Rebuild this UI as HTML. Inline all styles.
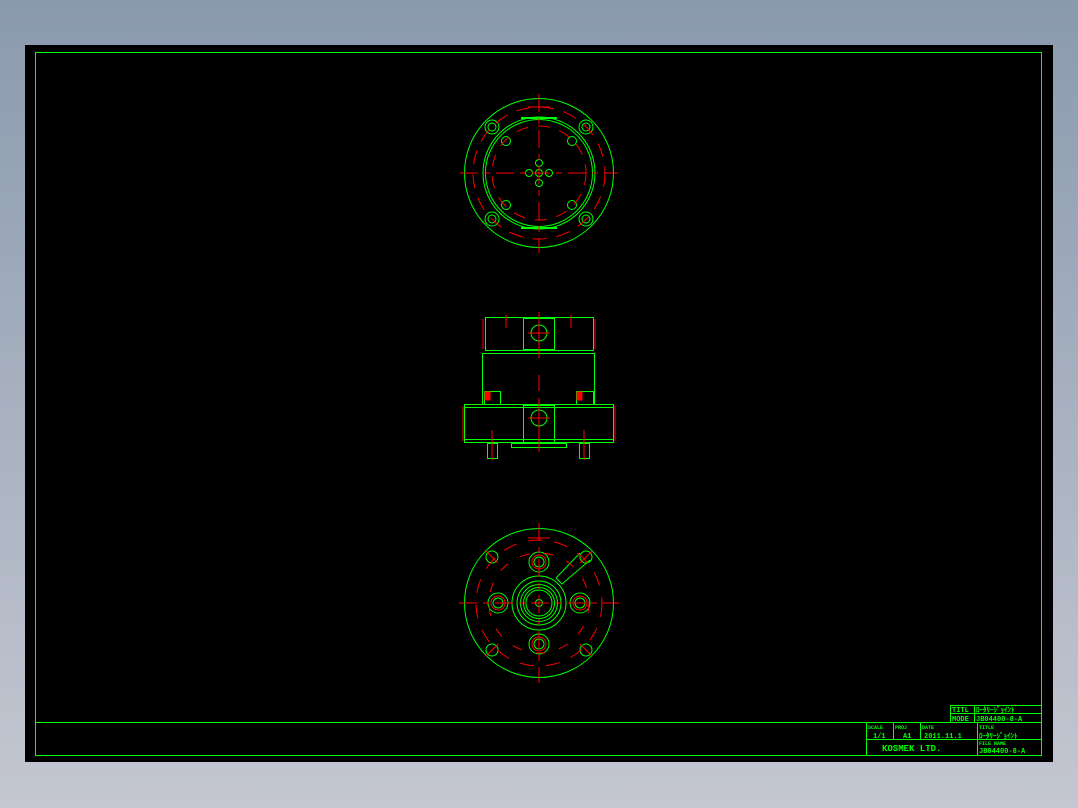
<!DOCTYPE html>
<html><head><meta charset="utf-8"><style>
html,body{margin:0;padding:0;width:1078px;height:808px;overflow:hidden;background:linear-gradient(#8a9aae,#c4c7d1);}
svg{position:absolute;left:0;top:0}
text{font-family:"Liberation Mono",monospace;fill:#00ff00;font-weight:bold}
</style></head><body>
<svg width="1078" height="808" viewBox="0 0 1078 808">
<rect x="25" y="45" width="1028" height="717" fill="#000"/>
<g fill="none" stroke="#00ff00" stroke-width="1">
<rect x="35.5" y="52.5" width="1006" height="703"/>
<line x1="35" y1="722.5" x2="1041" y2="722.5"/>
<!-- title block -->
<rect x="950.5" y="705.5" width="91" height="17"/>
<line x1="950" y1="713.5" x2="1041" y2="713.5"/>
<line x1="974.5" y1="705" x2="974.5" y2="722"/>
<line x1="866.5" y1="722" x2="866.5" y2="755"/>
<line x1="866" y1="739.5" x2="1041" y2="739.5"/>
<line x1="893.5" y1="722" x2="893.5" y2="739"/>
<line x1="920.5" y1="722" x2="920.5" y2="739"/>
<line x1="977.5" y1="722" x2="977.5" y2="755"/>
</g>
<g font-size="7">
<text x="952" y="712">TITL</text><text x="976" y="712">ﾛｰﾀﾘｰｼﾞｮｲﾝﾄ</text>
<text x="952" y="721">MODE</text><text x="976" y="721">JB04400-8-A</text>
<text x="868" y="729" font-size="5">SCALE</text><text x="895" y="729" font-size="5">PROJ</text><text x="922" y="729" font-size="5">DATE</text><text x="979" y="729" font-size="5">TITLE</text>
<text x="873" y="738">1/1</text><text x="903" y="738">A1</text><text x="924" y="738">2011.11.1</text><text x="979" y="738">ﾛｰﾀﾘｰｼﾞｮｲﾝﾄ</text>
<text x="979" y="745" font-size="5">FILE NAME</text><text x="979" y="753">JB04400-8-A</text>
<text x="882" y="751" font-size="9">KOSMEK LTD.</text>
</g>

<!-- TOP VIEW -->
<g fill="none" stroke="#00ff00">
<circle cx="539" cy="173" r="74.5"/>
<circle cx="539" cy="173" r="56"/>
<circle cx="539" cy="173" r="53.5"/>
<circle cx="492" cy="127" r="7"/><circle cx="586" cy="127" r="7"/><circle cx="492" cy="219" r="7"/><circle cx="586" cy="219" r="7"/>
<circle cx="492" cy="127" r="4"/><circle cx="586" cy="127" r="4"/><circle cx="492" cy="219" r="4"/><circle cx="586" cy="219" r="4"/>
<circle cx="506" cy="141" r="4.5"/><circle cx="572" cy="141" r="4.5"/><circle cx="506" cy="205" r="4.5"/><circle cx="572" cy="205" r="4.5"/>
<circle cx="539" cy="163" r="3.5"/><circle cx="539" cy="183" r="3.5"/><circle cx="529" cy="173" r="3.5"/><circle cx="549" cy="173" r="3.5"/>
<circle cx="539" cy="173" r="3.5"/>
<line x1="521" y1="118" x2="557" y2="118" stroke-width="2"/><line x1="521" y1="228" x2="557" y2="228" stroke-width="2"/>
</g>
<g fill="none" stroke="#ff0000">
<circle cx="539" cy="173" r="66" stroke-dasharray="14 10"/>
<circle cx="539" cy="173" r="47" stroke-dasharray="12 10"/>
<line x1="539" y1="94" x2="539" y2="253" stroke-dasharray="18 6 6 6"/>
<line x1="460" y1="173" x2="618" y2="173" stroke-dasharray="18 6 6 6"/>
<line x1="528" y1="107" x2="550" y2="107"/>
</g>

<!-- SIDE VIEW -->
<g fill="none" stroke="#00ff00">
<rect x="485.5" y="317.5" width="108" height="33"/>
<rect x="523.5" y="318.5" width="31" height="31"/>
<rect x="482.5" y="353.5" width="112" height="51"/>
<rect x="464.5" y="404.5" width="149" height="38"/>
<line x1="464" y1="407.5" x2="613" y2="407.5"/><line x1="464" y1="439.5" x2="613" y2="439.5"/>
<rect x="523.5" y="405.5" width="31" height="37"/>
<rect x="484.5" y="391.5" width="16" height="13"/><rect x="576.5" y="391.5" width="17" height="13"/>
<rect x="511.5" y="443.5" width="55" height="4"/>
<rect x="487.5" y="443.5" width="10" height="15"/><rect x="579.5" y="443.5" width="10" height="15"/>
<circle cx="539" cy="333" r="8"/><circle cx="539" cy="418" r="8"/>
</g>
<g stroke="#ff0000" fill="none">
<line x1="539" y1="312" x2="539" y2="358"/><line x1="539" y1="375" x2="539" y2="391"/><line x1="539" y1="398" x2="539" y2="452"/>
<line x1="483" y1="319" x2="483" y2="349"/><line x1="595" y1="319" x2="595" y2="349"/>
<line x1="463" y1="406" x2="463" y2="441"/><line x1="615" y1="406" x2="615" y2="441"/>
<line x1="506" y1="315" x2="506" y2="328"/><line x1="571" y1="315" x2="571" y2="328"/>
<line x1="528" y1="333" x2="550" y2="333"/><line x1="528" y1="418" x2="550" y2="418"/>
<line x1="492" y1="430" x2="492" y2="460"/><line x1="584" y1="430" x2="584" y2="460"/>
<rect x="485" y="392" width="5" height="8" fill="#ff0000"/><rect x="577" y="392" width="5" height="8" fill="#ff0000"/>
</g>

<!-- BOTTOM VIEW -->
<g fill="none" stroke="#00ff00">
<circle cx="539" cy="603" r="74.5"/>
<circle cx="539" cy="603" r="27"/><circle cx="539" cy="603" r="22"/><circle cx="539" cy="603" r="18.5"/><circle cx="539" cy="603" r="15.5"/><circle cx="539" cy="603" r="13"/>
<circle cx="539" cy="603" r="3.5"/>
<circle cx="539" cy="562" r="10"/><circle cx="539" cy="644" r="10"/><circle cx="498" cy="603" r="10"/><circle cx="580" cy="603" r="10"/>
<circle cx="539" cy="562" r="5"/><circle cx="539" cy="644" r="5"/><circle cx="498" cy="603" r="5"/><circle cx="580" cy="603" r="5"/>
<circle cx="492" cy="557" r="6"/><circle cx="586" cy="557" r="6"/><circle cx="492" cy="650" r="6"/><circle cx="586" cy="650" r="6"/>
<line x1="556" y1="578" x2="580" y2="553"/><line x1="562" y1="584" x2="590" y2="560"/><line x1="556" y1="578" x2="562" y2="584"/>
</g>
<g fill="none" stroke="#ff0000">
<circle cx="539" cy="603" r="63" stroke-dasharray="14 12"/>
<circle cx="539" cy="603" r="50" stroke-dasharray="10 14"/>
<line x1="539" y1="523" x2="539" y2="683" stroke-dasharray="18 6 6 6"/>
<line x1="459" y1="603" x2="619" y2="603" stroke-dasharray="18 6 6 6"/>
<line x1="528" y1="538" x2="550" y2="538"/>
<circle cx="539" cy="562" r="7"/><circle cx="539" cy="644" r="7"/><circle cx="498" cy="603" r="7"/><circle cx="580" cy="603" r="7"/>
<line x1="486" y1="551" x2="498" y2="563"/><line x1="580" y1="563" x2="592" y2="551"/>
<line x1="486" y1="656" x2="498" y2="644"/><line x1="580" y1="644" x2="592" y2="656"/>
</g>
</svg>
</body></html>
